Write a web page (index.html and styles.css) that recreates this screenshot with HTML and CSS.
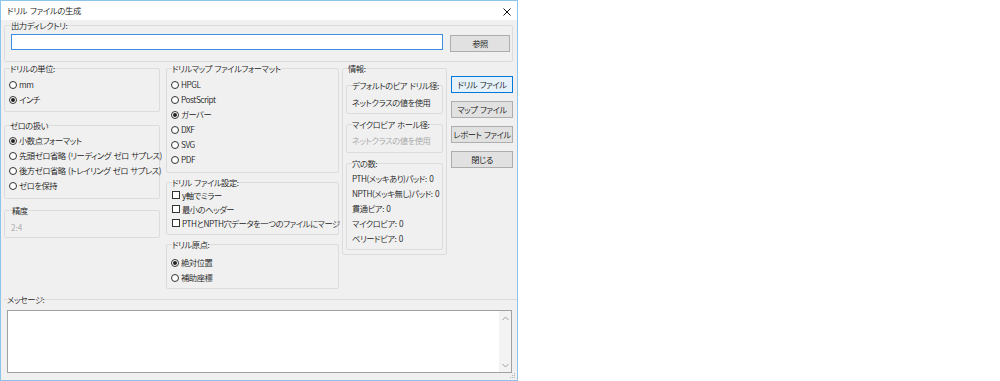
FILE: index.html
```html
<!DOCTYPE html>
<html lang="ja">
<head>
  <meta charset="UTF-8">
  <title>ドリル ファイルの生成</title>
  <link rel="stylesheet" href="styles.css">
</head>
<body>

<div class="dlg">

  <!--タイトルバー-->
  <div class="titlebar">
    <span class="title">ドリル ファイルの生成</span>
    <svg class="close" width="8" height="8" viewBox="0 0 8 8">
      <path d="M0.5 0.5 L7.5 7.5 M7.5 0.5 L0.5 7.5" stroke="#111" stroke-width="1" fill="none"/>
    </svg>
  </div>

  <div class="main">

    <!--出力ディレクトリ-->
    <fieldset class="grp outdir">
      <legend>出力ディレクトリ:</legend>
      <div class="dirrow">
        <div class="edit"></div>
        <div class="btn browse">参照</div>
      </div>
    </fieldset>

    <div class="cols">

      <!--左の列-->
      <div class="col left">
        <fieldset class="grp units">
          <legend>ドリルの単位:</legend>
          <div class="opt"><span class="rb"></span>mm</div>
          <div class="opt"><span class="rb on"></span>インチ</div>
        </fieldset>
        <fieldset class="grp zeros">
          <legend>ゼロの扱い</legend>
          <div class="opt"><span class="rb on"></span>小数点フォーマット</div>
          <div class="opt"><span class="rb"></span>先頭ゼロ省略 (リーディング ゼロ サプレス)</div>
          <div class="opt"><span class="rb"></span>後方ゼロ省略 (トレイリング ゼロ サプレス)</div>
          <div class="opt"><span class="rb"></span>ゼロを保持</div>
        </fieldset>
        <fieldset class="grp prec">
          <legend>精度</legend>
          <div class="opt off num">2:4</div>
        </fieldset>
      </div>

      <!--中の列-->
      <div class="col mid">
        <fieldset class="grp mapfmt">
          <legend>ドリルマップ ファイルフォーマット</legend>
          <div class="opt"><span class="rb"></span>HPGL</div>
          <div class="opt"><span class="rb"></span>PostScript</div>
          <div class="opt"><span class="rb on"></span>ガーバー</div>
          <div class="opt"><span class="rb"></span>DXF</div>
          <div class="opt"><span class="rb"></span>SVG</div>
          <div class="opt"><span class="rb"></span>PDF</div>
        </fieldset>
        <fieldset class="grp opts">
          <legend>ドリル ファイル設定:</legend>
          <div class="opt"><span class="cb"></span>y軸でミラー</div>
          <div class="opt"><span class="cb"></span>最小のヘッダー</div>
          <div class="opt"><span class="cb"></span>PTHとNPTH穴データを一つのファイルにマージ</div>
        </fieldset>
        <fieldset class="grp origin">
          <legend>ドリル原点:</legend>
          <div class="opt"><span class="rb on"></span>絶対位置</div>
          <div class="opt"><span class="rb"></span>補助座標</div>
        </fieldset>
      </div>

      <!--情報-->
      <fieldset class="grp info">
        <legend>情報:</legend>
        <fieldset class="grp sub via">
          <legend>デフォルトのビア ドリル径:</legend>
          <div class="opt">ネットクラスの値を使用</div>
        </fieldset>
        <fieldset class="grp sub uvia">
          <legend>マイクロビア ホール径:</legend>
          <div class="opt off">ネットクラスの値を使用</div>
        </fieldset>
        <fieldset class="grp sub holes">
          <legend>穴の数:</legend>
          <div class="opt">PTH(メッキあり)パッド: 0</div>
          <div class="opt">NPTH(メッキ無し)パッド: 0</div>
          <div class="opt">貫通ビア: 0</div>
          <div class="opt">マイクロビア: 0</div>
          <div class="opt">ベリードビア: 0</div>
        </fieldset>
      </fieldset>

      <!--ボタン-->
      <div class="btns">
        <div class="btn def">ドリル ファイル</div>
        <div class="btn">マップ ファイル</div>
        <div class="btn">レポート ファイル</div>
        <div class="btn">閉じる</div>
      </div>
    </div>

    <!--メッセージ-->
    <fieldset class="grp msg">
      <legend>メッセージ:</legend>
      <div class="msgbox">
        <div class="vscroll">
          <svg width="7" height="5" viewBox="0 0 7 5"><path d="M0.5 4 L3.5 1 L6.5 4" stroke="#a0a0a0" fill="none"/></svg>
          <svg width="7" height="5" viewBox="0 0 7 5"><path d="M0.5 1 L3.5 4 L6.5 1" stroke="#a0a0a0" fill="none"/></svg>
        </div>
      </div>
    </fieldset>
  </div>

  <!--右下のつまみ-->
  <svg class="grip" width="7" height="7" viewBox="0 0 7 7">
    <rect x="5" y="1" width="1" height="1" fill="#b0b0b0"/>
    <rect x="3" y="3" width="1" height="1" fill="#b0b0b0"/>
    <rect x="5" y="3" width="1" height="1" fill="#b0b0b0"/>
    <rect x="1" y="5" width="1" height="1" fill="#b0b0b0"/>
    <rect x="3" y="5" width="1" height="1" fill="#b0b0b0"/>
    <rect x="5" y="5" width="1" height="1" fill="#b0b0b0"/>
  </svg>
</div>

</body>
</html>
```

FILE: styles.css
```css
* {
  margin: 0;
  padding: 0;
  box-sizing: border-box;
}

body {
  background-color: #fff;
  font-family: "Noto Sans CJK JP", "Noto Sans", sans-serif;
  font-size: 8.3px;
  font-weight: 350;
  letter-spacing: -0.45px;
  word-spacing: 1px;
  line-height: 15px;
  font-feature-settings: "palt";
  color: #1a1a1a;
}

/*ダイアログ本体*/
.dlg {
  width: 518px;
  height: 381px;
  border: 1px solid #8fc4ea;
  background-color: #f0f0f0;
  position: relative;
}

.titlebar {
  height: 19px;
  background-color: #fff;
  display: flex;
  align-items: center;
  justify-content: space-between;
  padding: 0 5px 0 6px;
}

.title {
  line-height: 19px;
  letter-spacing: -0.3px;
  color: #111;
}

.close {
  margin-top: 2px;
  margin-right: 1px;
}

.main {
  padding-left: 3px;
}

/*グループボックス*/
fieldset.grp {
  border: 1px solid #dcdcdc;
  border-radius: 2px;
  padding: 0 3px 0 4px;
  min-width: 0;
}

fieldset.grp legend {
  line-height: 10px;
  padding: 0;
  margin-left: 1px;
  white-space: nowrap;
}

.outdir {
  width: 509px;
  padding: 4px 1px 9px 6px !important;
}

.outdir legend {
  margin-left: 0 !important;
}

.dirrow {
  display: flex;
  align-items: flex-start;
}

.edit {
  width: 432px;
  height: 16px;
  background-color: #fff;
  border: 1px solid #3d8ee0;
}

.btn {
  width: 62px;
  height: 17px;
  border: 1px solid #adadad;
  background-color: #e1e1e1;
  text-align: center;
  line-height: 15px;
  white-space: nowrap;
  color: #111;
}

.browse {
  width: 60px;
  margin-left: 7px;
  margin-top: 1px;
}

.btn.def {
  border-color: #0078d7;
  background-color: #e5f1fb;
}

/*列*/
.cols {
  display: flex;
  align-items: flex-start;
  margin-top: 1px;
}

.col {
  display: flex;
  flex-direction: column;
}

.left {
  width: 156px;
}

.mid {
  width: 173px;
  margin-left: 6px;
}

.opt {
  display: flex;
  align-items: center;
  height: 15px;
  white-space: nowrap;
}

.opt.off {
  color: #a6a6a6;
}

.opt.num {
  letter-spacing: 0;
}

/*ラジオボタン*/
.rb {
  width: 8px;
  height: 8px;
  border: 1px solid #333;
  border-radius: 50%;
  background-color: #fff;
  margin-right: 2px;
  display: flex;
  align-items: center;
  justify-content: center;
  flex-shrink: 0;
}

.rb.on::after {
  content: "";
  width: 4px;
  height: 4px;
  border-radius: 50%;
  background-color: #222;
}

/*チェックボックス*/
.cb {
  width: 8px;
  height: 8px;
  border: 1px solid #333;
  background-color: #fff;
  margin-left: 1px;
  margin-right: 2px;
  flex-shrink: 0;
}

.units {
  padding-top: 4px !important;
  padding-bottom: 4px !important;
}

.zeros {
  margin-top: 8px;
  padding-top: 3px !important;
  padding-bottom: 5px !important;
}

.prec {
  margin-top: 6px;
  padding-top: 5px !important;
  padding-bottom: 2px !important;
  padding-left: 6px !important;
}

.mapfmt {
  padding-top: 4px !important;
  padding-bottom: 5px !important;
}

.opts {
  margin-top: 4px;
  padding-top: 1px !important;
  padding-bottom: 4px !important;
}

.opts .opt {
  height: 14px;
}

.origin {
  margin-top: 4px;
  padding-top: 6px !important;
  padding-bottom: 3px !important;
}

/*情報*/
.info {
  width: 105px;
  margin-left: 3px;
  padding: 7px 3px 4px 3px !important;
}

.info > legend {
  margin-left: 2px !important;
}

.sub {
  padding-left: 5px !important;
}

.sub legend {
  margin-left: 0 !important;
}

.via {
  padding-top: 5px !important;
  padding-bottom: 3px !important;
}

.uvia {
  margin-top: 5px;
  padding-top: 4px !important;
  padding-bottom: 4px !important;
}

.holes {
  margin-top: 5px;
  padding-top: 3px !important;
  padding-bottom: 3px !important;
}

/*ボタン列*/
.btns {
  width: 62px;
  margin-left: 4px;
  padding-top: 13px;
  display: flex;
  flex-direction: column;
  gap: 8px;
}

/*メッセージ*/
fieldset.msg {
  margin-top: 5px;
  width: 513px;
  border: none;
  border-top: 1px solid #dcdcdc;
  border-radius: 0;
  padding: 6px 0 0 3px;
}

.msg legend {
  margin-left: 0 !important;
}

.msgbox {
  width: 505px;
  height: 63px;
  background-color: #fff;
  border: 1px solid #a0a0a0;
  display: flex;
  justify-content: flex-end;
}

.vscroll {
  width: 12px;
  background-color: #f3f3f3;
  display: flex;
  flex-direction: column;
  justify-content: space-between;
  align-items: center;
  padding: 5px 0 4px 0;
}

.grip {
  position: absolute;
  right: 1px;
  bottom: 1px;
}
```
